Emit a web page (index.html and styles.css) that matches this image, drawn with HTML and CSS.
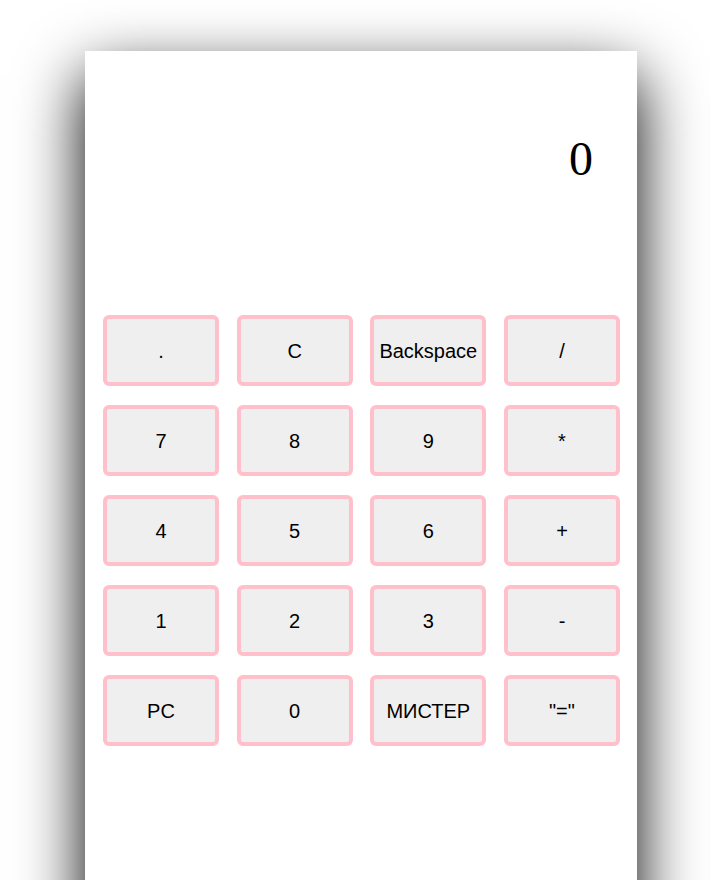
FILE: index.html
```html
<!DOCTYPE html>
<html lang="ru">
<head>
<meta charset="utf-8">
<title>Калькулятор</title>
<link rel="stylesheet" href="styles.css">
</head>
<body>
<div class="calculator">
  <div class="display">0</div>
  <div class="keys">
    <button class="key">.</button>
    <button class="key">C</button>
    <button class="key">Backspace</button>
    <button class="key">/</button>
    <button class="key">7</button>
    <button class="key">8</button>
    <button class="key">9</button>
    <button class="key">*</button>
    <button class="key">4</button>
    <button class="key">5</button>
    <button class="key">6</button>
    <button class="key">+</button>
    <button class="key">1</button>
    <button class="key">2</button>
    <button class="key">3</button>
    <button class="key">-</button>
    <button class="key">PC</button>
    <button class="key">0</button>
    <button class="key">МИСТЕР</button>
    <button class="key">"="</button>
  </div>
</div>
</body>
</html>
```

FILE: styles.css
```css
html, body {
  margin: 0;
  padding: 0;
  background: #ffffff;
  overflow: hidden;
}

.calculator {
  margin: 51px 0 0 85px;
  width: 552px;
  height: 880px;
  background: #ffffff;
  box-shadow: 0 25px 60px rgba(0, 0, 0, 1);
}

.display {
  box-sizing: border-box;
  height: 264px;
  padding: 80px 44px 0 0;
  text-align: right;
  font-family: "Liberation Serif", "Times New Roman", serif;
  font-size: 48px;
  line-height: normal;
  color: #000000;
}

.keys {
  display: grid;
  grid-template-columns: repeat(4, 116px);
  grid-auto-rows: 71px;
  justify-content: space-between;
  row-gap: 19px;
  padding: 0 17px 0 18px;
}

.key {
  box-sizing: border-box;
  width: 116px;
  height: 71px;
  padding: 2px 0 0 0;
  background: #efefef;
  border: 4px solid #ffc0cb;
  border-radius: 6px;
  font-family: "Liberation Sans", Arial, sans-serif;
  font-size: 20px;
  color: #000000;
  text-align: center;
}
```
